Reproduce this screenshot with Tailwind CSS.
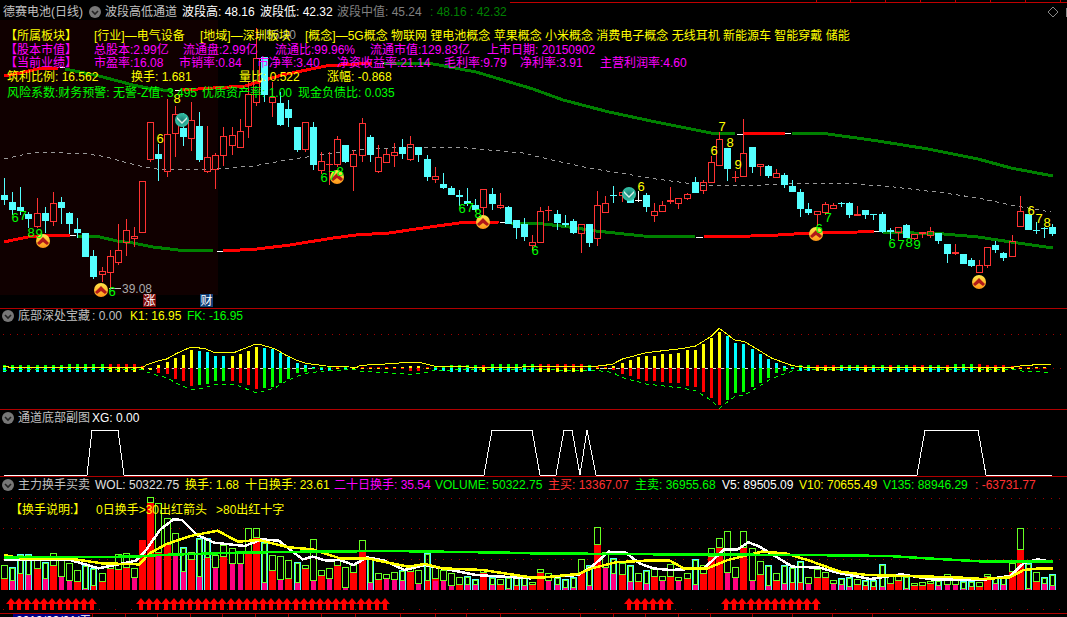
<!DOCTYPE html>
<html lang="zh-CN">
<head>
  <meta charset="UTF-8">
  <title>德赛电池(日线)</title>
  <script src="https://cdn.jsdelivr.net/npm/@tailwindcss/browser@4"></script>
</head>
<body class="bg-black w-[1067px] h-[617px] overflow-hidden flex flex-col text-[12px] leading-[14px] whitespace-nowrap font-['Liberation_Sans','Noto_Sans_CJK_SC',sans-serif]">

  <!-- Main K-line pane -->
  <section class="relative h-[309px] border-b border-[#b00000]">
    <svg id="mainChart" class="absolute inset-0" width="1067" height="308" viewBox="0 0 1067 308" shape-rendering="crispEdges"></svg>
    <div class="relative">
      <div class="flex items-center h-[24px] text-white">
        <span class="w-[89px] pl-[3px] text-[#c0c0c0]">德赛电池(日线)</span>
        <svg class="w-[12px] h-[12px] mr-[4px]" viewBox="0 0 12 12"><circle cx="6" cy="6" r="6" fill="#777"/><path d="M3 5l3 3 3-3" fill="none" stroke="#222" stroke-width="1.6"/></svg>
        <span class="w-[77px] text-[#c0c0c0]">波段高低通道</span>
        <span class="w-[78px]">波段高: 48.16</span>
        <span class="w-[77px]">波段低: 42.32</span>
        <span class="w-[93px] text-[#808080]">波段中值: 45.24</span>
        <span class="text-[#008000]">: 48.16 : 42.32</span>
      </div>
      <div class="flex h-[14px] mt-[5px] pl-[5px] text-[#ffff00]">
        <span class="w-[89px]">【所属板块】</span>
        <span class="w-[106px]">[行业]—电气设备</span>
        <span class="w-[105px]">[地域]—深圳板块</span>
        <span>[概念]—5G概念 物联网 锂电池概念 苹果概念 小米概念 消费电子概念 无线耳机 新能源车 智能穿戴 储能</span>
      </div>
      <div class="flex h-[13px] pl-[5px] text-[#ff00ff]">
        <span class="w-[89px]">【股本市值】</span>
        <span class="w-[89px]">总股本:2.99亿</span>
        <span class="w-[92px]">流通盘:2.99亿</span>
        <span class="w-[95px]">流通比:99.96%</span>
        <span class="w-[117px]">流通市值:129.83亿</span>
        <span>上市日期: 20150902</span>
      </div>
      <div class="flex h-[14px] pl-[5px] text-[#ff00ff]">
        <span class="w-[89px]">【当前业绩】</span>
        <span class="w-[85px]">市盈率:16.08</span>
        <span class="w-[78px]">市销率:0.84</span>
        <span class="w-[80px]">市净率:3.40</span>
        <span class="w-[107px]">净资收益率:21.14</span>
        <span class="w-[76px]">毛利率:9.79</span>
        <span class="w-[80px]">净利率:3.91</span>
        <span>主营利润率:4.60</span>
      </div>
      <div class="flex h-[16px] pl-[7px] text-[#ffff00]">
        <span class="w-[124px]">筑利比例: 16.562</span>
        <span class="w-[108px]">换手: 1.681</span>
        <span class="w-[88px]">量比: 0.522</span>
        <span>涨幅: -0.868</span>
      </div>
      <div class="flex h-[14px] pl-[7px] text-[#00ff00]">
        <span class="w-[195px]">风险系数:财务预警: 无警-Z值: 3.495</span>
        <span class="w-[96px]">优质资产率: 1.00</span>
        <span>现金负债比: 0.035</span>
      </div>
    </div>
  </section>

  <!-- 底部深处宝藏 -->
  <section class="relative h-[101px] border-b border-[#b00000]">
    <svg id="bottomChart" class="absolute inset-0" width="1067" height="100" viewBox="0 309 1067 100" shape-rendering="crispEdges"></svg>
    <div class="relative flex items-center h-[14px] pl-[2px]">
      <svg class="w-[12px] h-[12px] mr-[4px]" viewBox="0 0 12 12"><circle cx="6" cy="6" r="6" fill="#777"/><path d="M3 5l3 3 3-3" fill="none" stroke="#222" stroke-width="1.6"/></svg>
      <span class="w-[74px] text-[#c0c0c0]">底部深处宝藏</span>
      <span class="w-[38px] text-[#c0c0c0]">: 0.00</span>
      <span class="w-[57px] text-[#ffff00]">K1: 16.95</span>
      <span class="text-[#00ff00]">FK: -16.95</span>
    </div>
  </section>

  <!-- 通道底部副图 -->
  <section class="relative h-[67px] border-b border-[#b00000]">
    <svg id="channelChart" class="absolute inset-0" width="1067" height="66" viewBox="0 410 1067 66" shape-rendering="crispEdges"></svg>
    <div class="relative flex items-center h-[16px] pl-[2px]">
      <svg class="w-[12px] h-[12px] mr-[4px]" viewBox="0 0 12 12"><circle cx="6" cy="6" r="6" fill="#777"/><path d="M3 5l3 3 3-3" fill="none" stroke="#222" stroke-width="1.6"/></svg>
      <span class="w-[74px] text-[#c0c0c0]">通道底部副图</span>
      <span class="text-white">XG: 0.00</span>
    </div>
  </section>

  <!-- 主力换手买卖 -->
  <section class="relative h-[137px] border-b border-[#b00000]">
    <svg id="volumeChart" class="absolute inset-0" width="1067" height="136" viewBox="0 477 1067 136" shape-rendering="crispEdges"></svg>
    <div class="relative flex items-center h-[16px] pl-[2px]">
      <svg class="w-[12px] h-[12px] mr-[4px]" viewBox="0 0 12 12"><circle cx="6" cy="6" r="6" fill="#777"/><path d="M3 5l3 3 3-3" fill="none" stroke="#222" stroke-width="1.6"/></svg>
      <span class="w-[77px] text-[#c0c0c0]">主力换手买卖</span>
      <span class="w-[90px] text-[#e0e0e0]">WOL: 50322.75</span>
      <span class="w-[60px] text-[#ffff00]">换手: 1.68</span>
      <span class="w-[89px] text-[#ffff00]">十日换手: 23.61</span>
      <span class="w-[101px] text-[#ff00ff]">二十日换手: 35.54</span>
      <span class="w-[113px] text-[#00ff00]">VOLUME: 50322.75</span>
      <span class="w-[87px] text-[#ff3232]">主买: 13367.07</span>
      <span class="w-[87px] text-[#00ff00]">主卖: 36955.68</span>
      <span class="w-[77px] text-white">V5: 89505.09</span>
      <span class="w-[84px] text-[#ffff00]">V10: 70655.49</span>
      <span class="w-[92px] text-[#00ff00]">V135: 88946.29</span>
      <span class="text-[#ff3232]">: -63731.77</span>
    </div>
    <div class="relative flex h-[14px] mt-[10px] pl-[10px] text-[#ffff00]">
      <span class="w-[86px]">【换手说明:】</span>
      <span class="w-[120px]">0日换手&gt;30出红箭头</span>
      <span>&gt;80出红十字</span>
    </div>
  </section>

  <!-- Date axis -->
  <footer class="relative h-[3px] overflow-hidden">
    <svg id="dateAxis" class="absolute inset-0" width="1067" height="3" shape-rendering="crispEdges"></svg>
    <div class="relative ml-[13px] w-[77px] h-[3px] pl-[3px] bg-[#000080] text-white">2019/03/01/五</div>
  </footer>

  <script>
    const RED = '#ff3232', CYAN = '#54ffff', GREEN = '#00ff00', YELLOW = '#ffff00';
    const cx = i => Math.floor(4.5 + 8.125 * i);
    const rect = (x, y, w, h, fill) => `<rect x="${x}" y="${y}" width="${w}" height="${h}" fill="${fill}"/>`;
    const line = (pts, color, width, dash) => `<polyline points="${pts.map(p => p.join(',')).join(' ')}" fill="none" stroke="${color}" stroke-width="${width}"${dash ? ` stroke-dasharray="${dash}"` : ''}/>`;
    const label = (x, y, s, color) => `<text x="${x}" y="${y + 5}" text-anchor="middle" fill="${color}" font-size="13" font-family="Liberation Sans" shape-rendering="auto">${s}</text>`;

    // [high, body top, body bottom, low, colour]  r = red, c = cyan, w = white
    const candles = [
      [178,195,200,205,'c'],[192,202,210,215,'c'],[187,207,211,215,'c'],[212,214,219,228,'c'],[198,213,227,228,'r'],
      [207,213,221,233,'c'],[192,203,222,226,'r'],[197,202,208,224,'c'],[212,213,224,234,'c'],[218,229,233,238,'c'],
      [233,233,257,257,'c'],[250,256,277,279,'c'],[267,271,275,282,'r'],[250,256,273,290,'r'],[224,250,263,265,'r'],
      [219,230,243,256,'r'],[227,236,239,247,'r'],[181,181,233,233,'r'],[122,122,160,162,'r'],[144,154,159,181,'c'],
      [99,134,172,177,'r'],[106,114,134,157,'r'],[113,128,137,146,'c'],[102,120,139,151,'r'],[112,126,160,162,'c'],
      [126,157,172,173,'r'],[153,155,170,189,'r'],[127,136,156,166,'r'],[127,135,146,155,'r'],[119,131,148,148,'r'],
      [82,94,127,138,'r'],[28,58,103,106,'r'],[57,57,95,102,'c'],[82,97,103,117,'r'],[92,103,125,126,'c'],
      [100,109,118,127,'c'],[127,127,150,152,'c'],[122,122,150,152,'r'],[122,127,165,170,'c'],[152,161,171,174,'r'],
      [152,164,165,185,'r'],[136,139,165,167,'r'],[145,145,162,163,'c'],[150,154,167,191,'r'],[118,123,156,162,'r'],
      [135,137,155,162,'c'],[145,157,172,173,'r'],[149,154,163,163,'r'],[143,152,156,167,'r'],[139,147,154,159,'c'],
      [136,144,160,161,'r'],[147,147,155,162,'c'],[155,159,177,181,'c'],[167,176,180,183,'r'],[173,184,188,189,'c'],
      [186,188,195,195,'c'],[190,195,197,206,'c'],[188,201,204,206,'c'],[199,205,210,212,'c'],[189,189,208,215,'r'],
      [188,194,204,210,'c'],[193,205,208,209,'r'],[206,207,224,224,'c'],[220,220,228,239,'c'],[218,224,237,241,'c'],
      [235,242,246,250,'r'],[207,211,243,243,'r'],[206,210,211,221,'r'],[210,214,223,230,'c'],[215,223,225,227,'c'],
      [219,221,233,234,'c'],[224,224,234,253,'r'],[224,224,243,247,'c'],[191,205,239,246,'r'],[196,203,213,213,'r'],
      [186,195,196,203,'c'],[192,192,196,202,'r'],[188,196,203,203,'c'],[191,200,201,202,'w'],[193,195,207,212,'c'],
      [203,211,216,222,'r'],[201,205,212,212,'r'],[187,200,202,204,'r'],[198,198,204,209,'r'],[193,194,199,200,'r'],
      [177,182,193,193,'c'],[180,182,191,194,'r'],[156,162,183,183,'r'],[132,139,166,166,'r'],[148,148,169,181,'c'],
      [171,177,178,182,'r'],[119,153,177,177,'r'],[147,147,167,173,'c'],[164,164,167,176,'r'],[165,166,176,178,'c'],
      [169,173,178,178,'r'],[173,175,185,188,'c'],[180,186,192,192,'c'],[189,192,209,217,'c'],[203,209,213,215,'c'],
      [211,211,215,226,'r'],[202,204,213,215,'r'],[203,205,209,209,'r'],[202,203,204,207,'c'],[202,203,215,218,'c'],
      [206,214,216,216,'r'],[210,210,215,219,'c'],[214,214,215,220,'c'],[212,214,232,233,'c'],[228,230,232,239,'c'],
      [227,227,233,240,'r'],[224,225,238,238,'c'],[234,234,239,240,'r'],[232,232,234,238,'r'],[227,231,236,238,'r'],
      [233,233,241,244,'c'],[244,244,254,263,'c'],[244,252,254,255,'r'],[254,254,264,264,'c'],[258,260,266,267,'c'],
      [260,265,273,273,'r'],[247,247,266,268,'r'],[241,245,250,253,'c'],[252,253,258,261,'c'],[235,241,257,257,'r'],
      [196,211,227,227,'r'],[214,214,230,230,'c'],[222,230,231,234,'c'],[227,228,229,238,'c'],[224,227,234,236,'c']
    ];

    function drawMain() {
      let s = `<defs>
        <linearGradient id="up" x1="0" y1="0" x2="0" y2="1"><stop offset="0" stop-color="#ffe84a"/><stop offset="1" stop-color="#ff9418"/></linearGradient>
        <radialGradient id="down"><stop offset="0" stop-color="#1d7f78"/><stop offset="1" stop-color="#35c4a8"/></radialGradient>
      </defs>`;
      s += rect(0, 20, 218, 275, '#100000');
      s += rect(510, 2, 557, 1, '#c00000');
      [816, 850, 885, 920, 955, 990, 1025, 1060].forEach(x => s += rect(x, 0, 1, 2, '#c00000'));
      s += `<polygon points="1053,7 1058,12 1053,17 1048,12" fill="none" stroke="#888" shape-rendering="auto"/>` + rect(1066, 8, 1, 9, '#888');

      // dashed middle line
      s += line([[4,159],[17,156],[27,154],[40,152],[88,154],[107,157],[120,161],[140,166],[157,169],[187,170],[217,169],[253,166],[287,160],[320,155],[356,150],[376,149],[406,147],[456,147],[489,150],[523,153],[556,161],[589,168],[656,179],[709,186],[764,185],[791,183],[844,183],[894,187],[944,193],[978,198],[1011,205],[1051,212]], '#999', 1, '4 4');

      // upper channel
      s += line([[4,76],[20,73],[37,69],[58,68]], '#ff0000', 3) + rect(60, 67, 5, 1, '#fff');
      s += line([[65,69],[99,76],[133,85],[153,89],[173,91]], '#008000', 3) + rect(175, 90, 6, 1, '#fff');
      s += line([[182,90],[245,86],[282,75],[326,66],[372,63]], '#ff0000', 3) + rect(377, 63, 7, 1, '#fff');
      s += line([[384,63],[428,63],[476,72],[533,89],[563,100],[609,112],[656,122],[711,133],[735,134]], '#008000', 3) + rect(737, 134, 6, 1, '#fff');
      s += line([[743,134],[751,133],[785,133]], '#ff0000', 3) + rect(785, 133, 6, 1, '#fff');
      s += line([[792,133],[821,133],[878,141],[928,149],[978,159],[1011,168],[1053,176]], '#008000', 3);

      // lower channel
      s += line([[4,242],[13,240],[28,237],[53,235],[70,235]], '#ff0000', 3) + rect(70, 235, 6, 1, '#fff');
      s += line([[78,236],[100,237],[117,241],[133,243],[153,247],[178,250],[213,251]], '#008000', 3) + rect(217, 251, 6, 1, '#fff');
      s += line([[223,251],[257,249],[290,245],[333,238],[356,235],[389,233],[423,228],[459,223],[499,222]], '#ff0000', 3) + rect(500, 222, 5, 1, '#fff');
      s += line([[511,223],[536,223],[569,227],[596,231],[643,236],[695,237]], '#008000', 3) + rect(696, 237, 7, 1, '#fff');
      s += line([[704,237],[751,236],[778,235],[811,233],[858,232],[874,231]], '#ff0000', 3) + rect(874, 231, 7, 1, '#fff');
      s += line([[883,232],[944,234],[978,237],[1011,242],[1053,248]], '#008000', 3);

      candles.forEach(([hi, top, bot, lo, k], i) => {
        const c = cx(i), color = k === 'r' ? RED : k === 'w' ? '#fff' : CYAN;
        if (hi < top) s += rect(c, hi, 1, top - hi, color);
        if (lo > bot) s += rect(c, bot, 1, lo - bot, color);
        if (k === 'r' && bot - top > 2) {
          s += `<rect x="${c - 2.5}" y="${top + 0.5}" width="6" height="${bot - top - 1}" fill="none" stroke="${color}"/>`;
        } else {
          s += rect(c - 3, top, 7, Math.max(bot - top, 1), color);
        }
      });

      // high / low markers
      s += rect(256, 34, 8, 1, '#aaa');
      s += `<text x="266" y="39" fill="#999" font-size="12" font-family="Liberation Sans" shape-rendering="auto">56.80</text>`;
      s += rect(109, 288, 12, 1, '#ccc');
      s += `<text x="122" y="293" fill="#aaa" font-size="12" font-family="Liberation Sans" shape-rendering="auto">39.08</text>`;

      [[43,241],[101,290],[337,177],[483,222],[816,234],[979,282]].forEach(([x, y]) => {
        s += `<g shape-rendering="auto"><circle cx="${x}" cy="${y}" r="7" fill="url(#up)"/><path d="M${x - 6} ${y + 2}l6-6 6 6-2 2-4-3-4 3z" fill="#b01818"/></g>`;
      });
      [[182,120],[629,194]].forEach(([x, y]) => {
        s += `<g shape-rendering="auto"><circle cx="${x}" cy="${y}" r="7" fill="url(#down)"/><path d="M${x - 5} ${y - 3}l5 5 5-5v2l-5 5-5-5z" fill="#d8f0e8"/></g>`;
      });

      [[15,217,'6'],[23,215,'7'],[31,232,'8'],[39,233,'9'],[112,291,'6'],[324,177,'6'],[332,175,'7'],[340,171,'8'],
       [462,208,'6'],[470,207,'7'],[478,213,'8'],[535,250,'6'],[828,217,'7'],[819,228,'6'],
       [892,243,'6'],[901,244,'7'],[909,242,'8'],[917,244,'9']].forEach(([x, y, t]) => s += label(x, y, t, GREEN));
      [[160,138,'6'],[177,98,'8'],[641,186,'6'],[722,126,'7'],[730,142,'8'],[714,150,'6'],[738,164,'9'],
       [1031,210,'6'],[1039,218,'7'],[1047,222,'8']].forEach(([x, y, t]) => s += label(x, y, t, YELLOW));

      // 涨 / 财 badges
      s += rect(143, 294, 13, 13, '#7a0a0a') + `<text x="149.5" y="305" text-anchor="middle" fill="#fff" font-size="12" font-family="Noto Sans CJK SC" shape-rendering="auto">涨</text>`;
      s += rect(200, 294, 13, 13, '#123f78') + `<text x="206.5" y="305" text-anchor="middle" fill="#fff" font-size="12" font-family="Noto Sans CJK SC" shape-rendering="auto">财</text>`;
      document.getElementById('mainChart').innerHTML = s;
    }

    // [kind, top, bottom] measured around zero at 190 on a 3x scale
    const repeat = (n, v) => Array.from({ length: n }, () => v);
    const bottomBars = [
      ...repeat(8, ['gc',180,200]), ...repeat(5, ['gc',177,200]), ...repeat(4, ['ry',178,200]), ['ry',184,196], ['ry',188,195],
      ['yr',180,203],['yr',172,208],['yr',160,222],['yr',150,228],['yr',135,243],
      ['cg',138,240],['cg',140,238],['cg',153,228],['cg',153,228],
      ['yr',153,228],['yr',147,233],['yr',138,240],['yr',127,252],
      ['cg',130,248],['cg',133,247],['cg',145,235],['cg',155,222],['cg',175,205],['cg',180,200],
      ['cg',187,192],['gc',187,195],['gc',183,198],['ry',184,192],['gc',183,195],['ry',186,192],
      ...repeat(4, ['ry',186,192]), ['yr',187,192],['yr',187,193],['yr',183,198],['yr',183,198],['ry',187,192],
      ['gc',186,194],['gc',183,197], ...repeat(4, ['gc',180,200]), ['ry',180,200], ...repeat(6, ['gc',177,200]),
      ...repeat(6, ['ry',178,200]), ['gc',180,197],['ry',183,192],['ry',186,192],['yr',183,195],
      ['yr',175,207],['yr',165,213],['yr',155,222],['yr',153,228],['yr',153,228],['yr',147,232],['yr',147,234],
      ['yr',144,234],['yr',135,243],['yr',135,245],['yr',117,261],['yr',99,278],['yr',80,300],
      ['cg',93,285],['cg',114,264],['cg',117,261],['cg',132,246],['cg',147,234],['cg',162,219],['cg',175,204],['cg',183,197],
      ['gc',186,192],['gc',180,197],['gc',180,197],['ry',180,197],['ry',180,197],['ry',180,197],
      ['gc',180,197],['gc',180,197],['gc',180,197],['ry',180,200],['gc',180,200],['gc',180,200],['ry',180,200],
      ['gc',180,200],['gc',180,200],['ry',180,200],['ry',180,200],['gc',180,200],['gc',180,200],['ry',180,200],
      ['gc',177,200],['gc',177,200],['gc',177,200],['ry',177,200],['ry',180,200],['ry',180,200],['ry',180,200],
      ['ry',184,192],['ry',186,192],['ry',186,192],['yr',187,192],['yr',187,192]
    ];
    const barColors = { gc: ['#00ff00', '#00ffff'], ry: ['#ff0000', '#ffff00'], yr: ['#ffff00', '#ff0000'], cg: ['#00ffff', '#00ff00'] };

    function drawBottom() {
      const zero = 305 + 190 / 3;
      let s = line([[3,334],[1067,334]], '#a00000', 1, '1 6');
      s += line([[3,368],[1067,368]], '#a00000', 1, '1 6');
      s += line([[148,368],[315,368]], '#ddd', 1, '4 4') + line([[600,368],[790,368]], '#ddd', 1, '4 4');
      const y = v => Math.round(305 + v / 3);
      bottomBars.forEach(([k, top, bot], i) => {
        const c = cx(i), [upper, lower] = barColors[k];
        s += rect(c - 1, y(top), 3, 368 - y(top), upper) + rect(c - 1, 368, 3, y(bot) - 368, lower);
      });
      const left = [[10,183],[30,187],[420,187],[430,180],[465,168],[490,162],[520,145],[560,127],[600,130],[630,142],[690,142],[750,118],[770,120],[810,132],[840,150],[870,165],[900,175],[960,183],[1050,187],[1060,181],[1120,178],[1200,172],[1240,174],[1280,184],[1430,187]].map(([x, v]) => [x * 0.34, 305 + v / 3]);
      const right = [[180,184],[230,178],[260,162],[330,143],[440,130],[475,123],[520,95],[545,70],[590,105],[620,110],[700,160],[760,182],[800,187],[1400,188],[1440,181],[1520,178]].map(([x, v]) => [534 + x * 0.34, 305 + v / 3]);
      const k1 = [...left, ...right];
      s += line(k1.map(([x, v]) => [x, 2 * zero - v]), '#00ff00', 1, '4 4');
      s += line(k1, '#ffff00', 1);
      document.getElementById('bottomChart').innerHTML = s;
    }

    function drawChannel() {
      const pts = [[4,475],[87,475],[92,430],[118,430],[124,475],[484,475],[492,430],[532,430],[540,475],[556,475],[564,430],[572,430],[580,475],[587,430],[596,475],[917,475],[925,430],[978,430],[986,475],[1052,475]];
      document.getElementById('channelChart').innerHTML = line(pts, '#fff', 1);
    }

    // [top, red starts, pink starts, kind]  values on a 3x scale from y = 470, baseline 361
    const volumes = [
      [286,328,361,'g'],[292,333,333,'c'],[253,311,361,'c'],[253,315,315,'c'],[258,296,361,'g'],[277,327,327,'c'],[250,287,361,'g'],[270,321,321,'g'],
      [280,333,333,'g'],[301,335,361,'g'],[286,357,357,'c'],[294,347,361,'c'],[310,335,361,'g'],[285,297,361,'g'],[253,300,361,'g'],[250,295,361,'g'],
      [295,323,323,'g'],[210,210,361,'r'],[82,98,361,'g'],[100,250,258,'g'],[145,225,361,'g'],[190,258,258,'g'],[232,305,305,'c'],[245,270,361,'g'],
      [205,320,320,'c'],[205,263,361,'c'],[255,295,295,'g'],[225,260,361,'g'],[235,282,282,'g'],[245,282,282,'g'],[175,245,361,'g'],[175,205,361,'g'],
      [215,340,340,'c'],[255,302,361,'g'],[258,330,330,'g'],[270,327,361,'g'],[277,338,338,'c'],[286,297,361,'g'],[208,333,333,'g'],[300,317,361,'g'],
      [295,327,327,'g'],[270,287,361,'g'],[292,353,353,'g'],[285,310,361,'g'],[210,245,361,'g'],[265,340,340,'c'],[310,330,361,'g'],[313,328,328,'g'],
      [305,330,330,'g'],[300,333,333,'c'],[285,307,361,'g'],[300,342,342,'g'],[250,332,361,'c'],[292,327,333,'g'],[300,333,333,'g'],[310,348,348,'g'],
      [322,345,361,'g'],[318,345,345,'c'],[328,345,345,'c'],[296,308,361,'g'],[322,345,345,'c'],[328,345,361,'g'],[322,357,357,'c'],[322,348,361,'c'],
      [322,348,348,'c'],[335,345,361,'g'],[297,310,361,'g'],[310,333,333,'g'],[322,345,345,'c'],[328,353,353,'c'],[322,355,355,'c'],[268,310,361,'g'],
      [285,347,347,'c'],[172,225,361,'g'],[245,293,293,'g'],[265,312,312,'c'],[280,315,361,'g'],[285,337,337,'c'],[310,337,361,'g'],[300,342,342,'c'],
      [297,322,361,'g'],[318,333,333,'g'],[282,322,361,'g'],[322,333,333,'g'],[310,327,361,'g'],[268,345,345,'c'],[285,312,361,'g'],[235,262,361,'g'],
      [205,235,361,'g'],[183,310,310,'g'],[292,323,323,'g'],[183,233,361,'g'],[235,333,333,'g'],[273,315,361,'g'],[285,348,348,'c'],[310,333,361,'g'],
      [285,342,342,'c'],[291,338,361,'c'],[273,338,361,'c'],[320,342,342,'g'],[297,323,361,'g'],[307,323,361,'g'],[331,343,343,'g'],[325,345,345,'c'],
      [322,352,352,'c'],[328,345,361,'g'],[330,348,361,'c'],[330,350,361,'c'],[283,352,352,'c'],[318,342,361,'g'],[315,333,361,'g'],[318,358,358,'c'],
      [340,348,361,'g'],[337,348,361,'g'],[333,342,361,'g'],[330,348,348,'c'],[313,345,345,'g'],[328,345,345,'g'],[333,357,357,'c'],[333,352,361,'c'],
      [337,352,361,'g'],[313,321,361,'g'],[320,342,342,'c'],[322,345,345,'c'],[280,305,361,'g'],[175,240,361,'g'],[280,358,358,'c'],[305,335,361,'g'],
      [320,343,343,'c'],[313,348,348,'c']
    ];

    function drawVolume() {
      const BOX = '#66ff22', PINK = '#ff0080', BASE = 590;
      const y = v => Math.round(470 + v / 3);
      let s = '';
      [498, 528, 559].forEach(d => s += line([[3,d],[1067,d]], '#a00000', 1, '1 7'));
      s += line([[3,609],[1067,609]], '#a00000', 1, '1 15');
      volumes.forEach(([top, mid, pink, k], i) => {
        const c = cx(i), t = y(top), m = y(mid), p = y(pink);
        if (k === 'r') { s += rect(c - 3, t, 7, BASE - t, '#ff0000'); return; }
        if (k === 'c') {
          s += `<rect x="${c - 2.5}" y="${t + 0.5}" width="6" height="${BASE - t - 1}" fill="none" stroke="${CYAN}"/>`;
          s += `<rect x="${c - 1.5}" y="${t + 1.5}" width="4" height="${m - t - 2}" fill="none" stroke="${BOX}"/>`;
          if (p > m) s += rect(c - 2, m, 5, BASE - m, '#ff0000');
          if (p < BASE) s += rect(c - 2, p, 5, BASE - p, PINK);
          return;
        }
        s += `<rect x="${c - 2.5}" y="${t + 0.5}" width="6" height="${m - t - 1}" fill="none" stroke="${BOX}"/>`;
        if (p > m) s += rect(c - 3, m, 7, BASE - m, '#ff0000');
        if (p < BASE) s += rect(c - 2, p, 5, BASE - p, PINK);
      });
      const z8 = ([x, v]) => [x * 0.34, 470 + v / 3], z9 = ([x, v]) => [534 + x * 0.34, 470 + v / 3];
      const white = [...[[12,268],[60,268],[200,268],[290,295],[340,285],[400,272],[430,240],[470,180],[510,148],[535,150],[580,195],[630,218],[720,228],[770,208],[820,212],[890,268],[920,260],[960,272],[1000,270],[1040,285],[1080,262],[1130,272],[1190,300],[1250,285],[1300,295],[1400,315],[1560,325]].map(z8),
        ...[[30,322],[130,315],[170,290],[220,245],[270,248],[310,280],[350,295],[400,300],[500,295],[560,238],[600,238],[630,217],[660,228],[720,265],[760,290],[840,293],[900,310],[990,327],[1080,313],[1170,328],[1330,328],[1400,318],[1440,280],[1480,268],[1520,275]].map(z9)];
      const yellow = [...[[12,255],[60,265],[200,265],[300,280],[410,283],[440,250],[490,222],[560,198],[640,182],[700,215],[760,210],[850,232],[920,238],[1000,265],[1080,265],[1200,290],[1250,282],[1300,295],[1420,300],[1560,322]].map(z8),
        ...[[30,322],[130,312],[170,295],[240,277],[330,272],[400,272],[440,295],[510,295],[570,270],[670,245],[740,250],[810,272],[900,305],[980,315],[1240,322],[1320,327],[1400,322],[1440,300],[1480,296],[1525,296]].map(z9)];
      const green = [...[[12,262],[400,260],[470,255],[700,248],[900,245],[1150,243],[1490,248],[1568,250]].map(z8),
        ...[[380,253],[800,255],[1045,258],[1120,263],[1330,275],[1525,275]].map(z9)];
      s += line(white, '#fff', 2.5) + line(yellow, '#ffff00', 2.5) + line(green, '#00ff00', 2.5);

      // turnover arrows
      const arrow = c => `<polygon points="${c},598 ${c + 5},604 ${c + 2},604 ${c + 2},610 ${c - 2},610 ${c - 2},604 ${c - 5},604" fill="#ff0000" shape-rendering="auto"/>`;
      [[1,11],[17,47],[77,82],[89,100]].forEach(([a, b]) => {
        for (let i = a; i <= b; i++) s += arrow(cx(i) - 1);
      });
      document.getElementById('volumeChart').innerHTML = s;

      let ticks = '';
      [92,125,157,190,222,255,288,321,355,400,435,466,500,580,613,645,678,710,752,792,832,872].forEach(x => ticks += rect(x, 0, 1, 3, '#a00000'));
      document.getElementById('dateAxis').innerHTML = ticks;
    }

    drawMain();
    drawBottom();
    drawChannel();
    drawVolume();
  </script>
</body>
</html>
